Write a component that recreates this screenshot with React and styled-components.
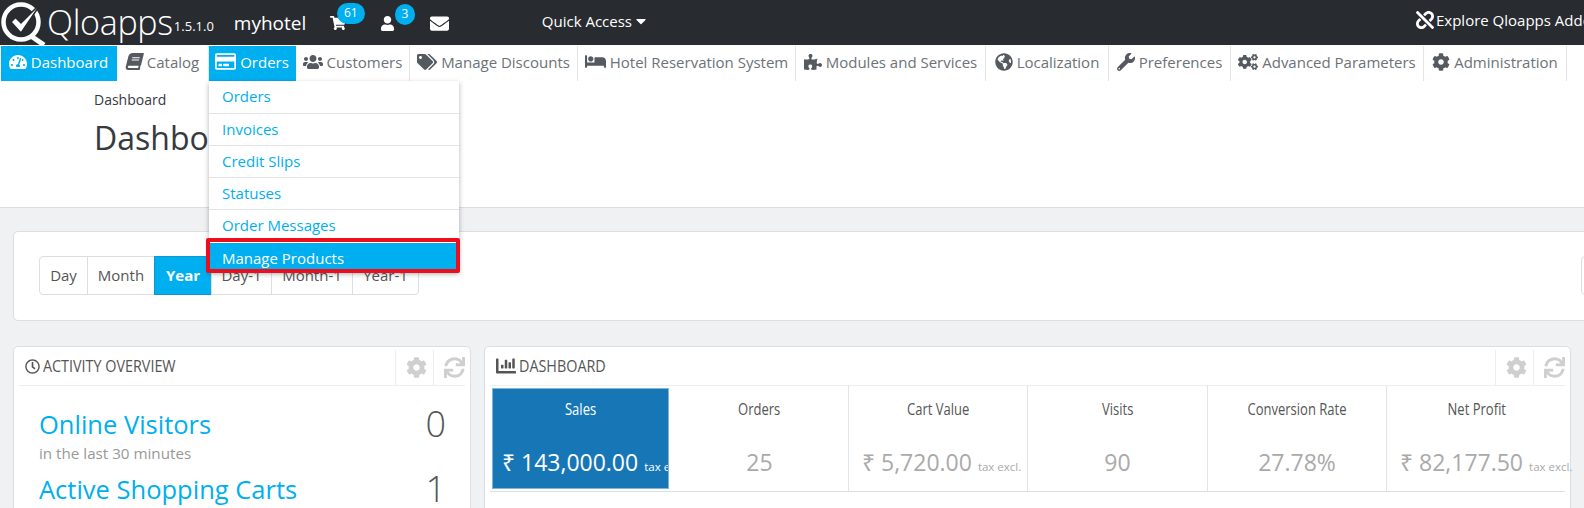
import React from "react";
import styled, { createGlobalStyle } from "styled-components";
import {
  FaTachometerAlt, FaBook, FaRegCreditCard, FaUsers, FaTags, FaBed, FaPuzzlePiece, FaGlobeAmericas,
  FaWrench, FaCogs, FaCog, FaShoppingCart, FaUser, FaEnvelope, FaUnlink, FaCaretDown, FaRegClock, FaChartBar, FaSync,
} from "react-icons/fa";

const Global = createGlobalStyle`
  html, body { margin: 0; padding: 0; height: 508px; overflow: hidden; background: #eff1f2; }
  body { font-family: "Open Sans", sans-serif; color: #555; }
  * { box-sizing: border-box; }
`;

const Page = styled.div`width: 1584px; height: 508px; overflow: hidden; position: relative;`;

const TopBar = styled.header`
  height: 45px; background: #282b30; color: #fff; display: flex; align-items: center; position: relative; white-space: nowrap; overflow: hidden;
`;
const LogoMark = styled.svg`width: 46px; height: 45px; flex: none;`;
const LogoText = styled.span`font-size: 34px; font-weight: 300; margin-left: 1px; letter-spacing: -0.3px; line-height: 45px;`;
const Version = styled.span`font-size: 13px; margin: 7px 0 0 1px;`;
const ShopName = styled.span`font-size: 19px; margin-left: 20px; width: 96px;`;
const NoticeIcon = styled.span`
  position: relative; font-size: ${p => p.$size}px; display: flex; width: ${p => p.$w}px; margin-top: 1px;
`;
const Badge = styled.span`
  position: absolute; left: ${p => p.$left}px; top: -12px; height: 21px; min-width: ${p => p.$min}px; border-radius: 11px;
  background: #00aff0; color: #fff; font-size: 12px; line-height: 20px; text-align: center;
`;
const QuickAccess = styled.span`
  font-size: 15px; margin-left: 92px; display: flex; align-items: center; gap: 1px; margin-top: -4px;
  svg { font-size: 16px; }
`;
const Explore = styled.span`
  font-size: 15px; position: absolute; left: 1416px; top: 10px; display: flex; align-items: center; gap: 2px;
  svg { font-size: 18px; }
`;

const Nav = styled.nav`height: 37px; background: #fff; display: flex; padding: 1px 0 0 1px; white-space: nowrap;`;
const NavItem = styled.a`
  width: ${p => p.$w}px; flex: none; height: 35px; padding-bottom: 4px; display: flex; align-items: center; justify-content: center; gap: 4px;
  font-size: 15px; color: ${p => (p.$active ? "#fff" : "#6c7277")};
  background: ${p => (p.$active ? "#00aff0" : "transparent")};
  border-right: 1px solid ${p => (p.$active ? "#00aff0" : "#e5e5e5")};
  svg { flex: none; color: ${p => (p.$active ? "#fff" : "#555a60")}; font-size: ${p => p.$icon || 18}px; ${p => p.$skew && "transform: skewX(-14deg);"} }
`;

const PageHead = styled.div`
  height: 126px; background: #fff; border-bottom: 1px solid #dcdfe1; padding: 8px 0 0 94px; color: #363a41;
`;
const Crumb = styled.div`font-size: 14px; line-height: 20px;`;
const Title = styled.h1`font-size: 32px; font-weight: 400; margin: 6px 0 0; line-height: 44px; color: #363a41;`;

const Dropdown = styled.div`
  position: absolute; left: 209px; top: 81px; width: 250px; background: #fff; box-shadow: 0 2px 5px rgba(0,0,0,.3); z-index: 5; padding-bottom: 2px;
`;
const DropItem = styled.a`
  display: block; height: 32px; line-height: 31px; padding-left: 13px; font-size: 15px; color: #00aff0; border-bottom: 1px solid #e3e3e3;
  &:first-child { height: 33px; }
`;
const DropActive = styled(DropItem)`
  position: relative; background: #00aff0; color: #fff; border-bottom: 0; height: 28px; line-height: 31px; border-top: 1px solid #fff;
  &::after { content: ""; position: absolute; left: -3px; right: -1px; top: -5px; bottom: -3px; border: 4px solid #ee0d1b; border-radius: 2px; }
`;

const Content = styled.main`padding: 23px 13px 0; display: flex; flex-direction: column; gap: 25px; width: 1584px;`;
const RangeCard = styled.section`
  height: 90px; width: 1640px; background: #fff; border: 1px solid #dcdfe1; border-radius: 5px; padding: 24px 25px; display: flex;
`;
const BtnGroup = styled.div`display: flex; height: 39px;`;
const RangeBtn = styled.button`
  width: ${p => p.$w}px; height: 39px; padding: 0 0 2px; font: ${p => (p.$on ? 700 : 400)} 15px "Open Sans", sans-serif;
  color: ${p => (p.$on ? "#fff" : "#555")}; background: ${p => (p.$on ? "#00aff0" : "#fff")};
  border: 1px solid ${p => (p.$on ? "#0a9ad1" : "#dcdfe1")}; margin-left: -1px;
  &:first-child { border-radius: 4px 0 0 4px; margin-left: 0; }
  &:last-child { border-radius: 0 4px 4px 0; }
`;
const CalendarBox = styled.div`
  position: absolute; left: 1581px; top: 256px; width: 40px; height: 39px; border: 1px solid #dcdfe1; border-radius: 4px 0 0 4px; background: #fff;
`;

const Columns = styled.div`display: flex; gap: 13px; align-items: flex-start;`;
const Panel = styled.section`
  width: ${p => p.$w}px; height: 170px; flex: none; background: #fff; border: 1px solid #dcdfe1; border-radius: 5px; padding: 0 5px;
`;
const PanelHead = styled.div`
  height: 39px; display: flex; align-items: center; border-bottom: 1px solid #eee; color: #555; padding-left: 6px;
`;
const PanelTitle = styled.h3`
  margin: 0; font-weight: 400; font-size: 16.5px; line-height: 36px; display: flex; align-items: center; gap: 3px; flex: 1;
  svg { font-size: ${p => p.$icon}px; flex: none; }
`;
const NarrowTitle = styled.span`display: inline-block; transform: scaleX(0.87); transform-origin: left center; white-space: nowrap;`;
const PanelActions = styled.div`display: flex; margin-right: -6px;`;
const PanelAction = styled.span`
  width: 38px; height: 36px; margin-top: 3px; padding-left: 3px; border-left: 1px solid #eee; display: flex; align-items: center; justify-content: center; color: #cfcfcf; font-size: 21px;
`;
const ActivityBody = styled.div`padding: 20px 19px 0 20px;`;
const ActivityRow = styled.div`display: flex; justify-content: space-between; align-items: flex-start;`;
const ActivityLabel = styled.div`font-size: 25.5px; line-height: 36px; color: #00aff0;`;
const ActivityHint = styled.div`font-size: 15.2px; line-height: 20px; color: #999; margin: 1px 0 8px;`;
const ActivityValue = styled.div`font-size: 36px; line-height: 36px; color: #555; font-weight: 300;`;

const Kpis = styled.div`display: flex; height: 106px; border-bottom: 1px solid #dcdfe1;`;
const Kpi = styled.div`
  width: ${p => p.$w}px; flex: none; text-align: center; padding-top: 11px; white-space: nowrap; border-right: 1px solid #e2e4e5;
  color: ${p => (p.$on ? "#fff" : "#555")};
  background: ${p => (p.$on ? "#1777b6" : "#fff")};
  ${p => p.$on && "margin: 3px 3px 2px 3px; height: 99px; overflow: hidden; outline: 1px solid #7fb5d8; border-right: 0; padding-top: 8px;"}
  &:last-child { border-right: 0; }
`;
const KpiName = styled.div`display: inline-block; transform: scaleX(0.84); font-size: 15.5px; line-height: 24px;`;
const KpiValue = styled.div`
  margin-top: 24px; font-size: 23px; line-height: 34px; color: ${p => (p.$on ? "#fff" : "#aaa")};
  ${p => p.$indent && `text-align: left; padding-left: ${p.$indent}px;`}
  small { font-size: 11.5px; margin-left: 6px; }
`;

const nav = [
  [FaTachometerAlt, "Dashboard", 116, true],
  [FaBook, "Catalog", 92, false, 17, true],
  [FaRegCreditCard, "Orders", 87, true, 21],
  [FaUsers, "Customers", 114, false, 20],
  [FaTags, "Manage Discounts", 168, false, 20],
  [FaBed, "Hotel Reservation System", 218, false, 21],
  [FaPuzzlePiece, "Modules and Services", 190],
  [FaGlobeAmericas, "Localization", 123],
  [FaWrench, "Preferences", 122],
  [FaCogs, "Advanced Parameters", 193, false, 20],
  [FaCog, "Administration", 143],
];
const menu = ["Orders", "Invoices", "Credit Slips", "Statuses", "Order Messages"];
const ranges = [["Day", 49], ["Month", 68], ["Year", 58, true], ["Day-1", 61], ["Month-1", 82], ["Year-1", 67]];
const kpis = [
  ["Orders", "25", null, 178],
  ["Cart Value", "₹ 5,720.00", "tax excl.", 179],
  ["Visits", "90", null, 180],
  ["Conversion Rate", "27.78%", null, 179],
  ["Net Profit", "₹ 82,177.50", "tax excl.", 179],
];

export default function App() {
  return (
    <Page>
      <Global />
      <TopBar>
        <LogoMark viewBox="0 0 46 45" fill="none">
          <circle cx="21" cy="22" r="17.5" stroke="#fff" strokeWidth="4.5" />
          <path d="M31 36 L44 45" stroke="#fff" strokeWidth="5" />
          <path d="M11 22 L21 33 L42 2 L21 23 L15.5 17.5 Z" fill="#fff" stroke="#282b30" strokeWidth="1.5" />
        </LogoMark>
        <LogoText>Qloapps</LogoText>
        <Version>1.5.1.0</Version>
        <ShopName>myhotel</ShopName>
        <NoticeIcon $size={16} $w={50}>
          <FaShoppingCart />
          <Badge $left={7} $min={28}>61</Badge>
        </NoticeIcon>
        <NoticeIcon $size={15} $w={50}>
          <FaUser />
          <Badge $left={15} $min={20}>3</Badge>
        </NoticeIcon>
        <NoticeIcon $size={19} $w={20}>
          <FaEnvelope />
        </NoticeIcon>
        <QuickAccess>Quick Access <FaCaretDown /></QuickAccess>
        <Explore><FaUnlink />Explore Qloapps Addons</Explore>
      </TopBar>
      <Nav>
        {nav.map(([Icon, label, w, active, icon, skew]) => (
          <NavItem key={label} $w={w} $active={active} $icon={icon} $skew={skew}><Icon />{label}</NavItem>
        ))}
      </Nav>
      <Dropdown>
        {menu.map(m => <DropItem key={m}>{m}</DropItem>)}
        <DropActive>Manage Products</DropActive>
      </Dropdown>
      <PageHead>
        <Crumb>Dashboard</Crumb>
        <Title>Dashboard</Title>
      </PageHead>
      <Content>
        <RangeCard>
          <BtnGroup>
            {ranges.map(([r, w, on]) => <RangeBtn key={r} $w={w} $on={on}>{r}</RangeBtn>)}
          </BtnGroup>
        </RangeCard>
        <CalendarBox />
        <Columns>
          <Panel $w={458}>
            <PanelHead>
              <PanelTitle $icon={15}><FaRegClock /><NarrowTitle>ACTIVITY OVERVIEW</NarrowTitle></PanelTitle>
              <PanelActions>
                <PanelAction><FaCog /></PanelAction>
                <PanelAction><FaSync /></PanelAction>
              </PanelActions>
            </PanelHead>
            <ActivityBody>
              <ActivityRow>
                <div>
                  <ActivityLabel>Online Visitors</ActivityLabel>
                  <ActivityHint>in the last 30 minutes</ActivityHint>
                </div>
                <ActivityValue>0</ActivityValue>
              </ActivityRow>
              <ActivityRow>
                <ActivityLabel>Active Shopping Carts</ActivityLabel>
                <ActivityValue>1</ActivityValue>
              </ActivityRow>
            </ActivityBody>
          </Panel>
          <Panel $w={1087}>
            <PanelHead>
              <PanelTitle $icon={20}><FaChartBar /><NarrowTitle>DASHBOARD</NarrowTitle></PanelTitle>
              <PanelActions>
                <PanelAction><FaCog /></PanelAction>
                <PanelAction><FaSync /></PanelAction>
              </PanelActions>
            </PanelHead>
            <Kpis>
              <Kpi $on $w={175}>
                <KpiName>Sales</KpiName>
                <KpiValue $on $indent={9}>₹ 143,000.00<small>tax excl.</small></KpiValue>
              </Kpi>
              {kpis.map(([n, v, s, w]) => (
                <Kpi key={n} $w={w}>
                  <KpiName>{n}</KpiName>
                  <KpiValue $indent={s ? 13 : 0}>{v}{s && <small>{s}</small>}</KpiValue>
                </Kpi>
              ))}
            </Kpis>
          </Panel>
        </Columns>
      </Content>
    </Page>
  );
}
